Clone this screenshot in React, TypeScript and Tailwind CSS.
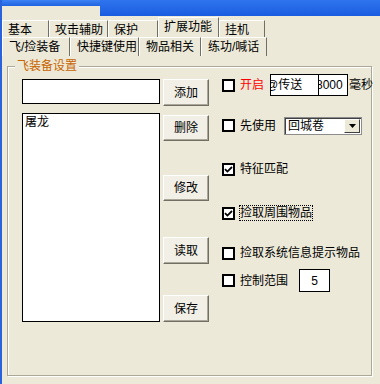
import React from 'react';

const FONT = "font-['Liberation_Sans','Noto_Sans_CJK_SC',sans-serif]";

interface TabProps {
  label: string;
  width: string;
  selected?: boolean;
}

const OuterTab: React.FC<TabProps> = ({ label, width, selected }) => (
  <div
    className={`${width} ${selected ? 'h-[20px] pt-[2px]' : 'mt-[3px] h-[17px] pt-[2px]'} pl-[5px] border-l border-t border-white border-r border-r-[#716f64] text-[12px] leading-[14px] text-black whitespace-nowrap`}
  >
    {label}
  </div>
);

const InnerTab: React.FC<TabProps> = ({ label, width }) => (
  <div
    className={`${width} h-[19px] pt-[2px] pl-[6px] border-l border-t border-white border-r border-r-[#716f64] text-[12px] leading-[14px] text-black whitespace-nowrap`}
  >
    {label}
  </div>
);

const WinButton: React.FC<{ label: string; className?: string }> = ({ label, className = '' }) => (
  <div
    className={`w-[46px] flex items-center justify-center bg-[#f1efe6] border border-t-white border-l-white border-b-[#716f64] border-r-[#716f64] shadow-[inset_-1px_-1px_0_#aca899] text-[12px] leading-[14px] ${className}`}
  >
    {label}
  </div>
);

const CheckBox: React.FC<{ checked?: boolean }> = ({ checked }) => (
  <div className="w-[13px] h-[13px] shrink-0 border-2 border-black bg-white flex items-center justify-center">
    {checked && (
      <svg width="9" height="9" viewBox="0 0 9 9">
        <path d="M1 4.2 L3.4 6.6 L8 2" fill="none" stroke="#000" strokeWidth="1.8" />
      </svg>
    )}
  </div>
);

export default function App() {
  return (
    <div className={`w-[380px] h-[384px] flex bg-[#ece9d8] overflow-hidden whitespace-nowrap ${FONT}`}>
      {/* window edge */}
      <div className="w-[2px] h-full bg-[#2a62dc]" />

      <div className="flex-1 flex flex-col">
        {/* title bar bottom */}
        <div className="h-[17px] flex">
          <div className="w-[98px]">
            <div className="h-[6px] bg-linear-to-b from-[#3d82f4] to-[#1f62e0]" />
          </div>
          <div className="flex-1 h-[16px] bg-linear-to-b from-[#2f74ee] to-[#1a5ce0]" />
        </div>

        {/* outer tabs */}
        <div className="h-[20px] flex items-start">
          <OuterTab label="基本" width="w-[47px]" />
          <OuterTab label="攻击辅助" width="w-[59px]" />
          <OuterTab label="保护" width="w-[50px]" />
          <OuterTab label="扩展功能" width="w-[61px]" selected />
          <OuterTab label="挂机" width="w-[46px]" />
        </div>

        {/* inner tabs */}
        <div className="h-[19px] flex">
          <InnerTab label="飞/捡装备" width="w-[68px]" />
          <InnerTab label="快捷键使用" width="w-[69px]" />
          <InnerTab label="物品相关" width="w-[62px]" />
          <InnerTab label="练功/喊话" width="w-[66px]" />
        </div>

        {/* group box */}
        <div className="relative mt-[10px] ml-[5px] w-[365px] h-[310px] border border-[#aca899] shadow-[inset_1px_1px_0_#fff,1px_1px_0_#fff]">
          <div className="absolute left-[7px] top-[-8px] px-[2px] bg-[#ece9d8] text-[12px] leading-[14px] text-[#c86400]">
            飞装备设置
          </div>

          <div className="flex items-start">
            {/* left: edit + list */}
            <div className="ml-[14px] mt-[12px] flex flex-col shrink-0">
              <div className="w-[138px] h-[25px] bg-white border border-black" />
              <div className="mt-[9px] w-[138px] h-[209px] bg-white border border-black px-[2px] pt-[1px] text-[12px] leading-[14px]">
                屠龙
              </div>
            </div>

            {/* buttons */}
            <div className="ml-[3px] mt-[12px] flex flex-col shrink-0">
              <WinButton label="添加" className="h-[27px]" />
              <WinButton label="删除" className="mt-[9px] h-[26px]" />
              <WinButton label="修改" className="mt-[34px] h-[26px]" />
              <WinButton label="读取" className="mt-[36px] h-[27px]" />
              <WinButton label="保存" className="mt-[31px] h-[27px]" />
            </div>

            {/* options */}
            <div className="ml-[13px] mt-[7px] flex-1 flex flex-col text-[12px] leading-[14px]">
              <div className="h-[22px] flex items-center">
                <CheckBox />
                <span className="ml-[5px] w-[25px] shrink-0 text-[#ff0000]">开启</span>
                <div className="ml-[5px] h-[22px] flex shrink-0 bg-white border border-black">
                  <div className="w-[48px] overflow-hidden border-r border-black flex items-center">
                    <span className="-ml-[5px]">@传送</span>
                  </div>
                  <div className="w-[28px] overflow-hidden flex items-center">
                    <span className="-ml-[3px]">8000</span>
                  </div>
                </div>
                <span className="ml-[1px] shrink-0">毫秒</span>
              </div>

              <div className="mt-[20px] h-[19px] flex items-center">
                <CheckBox />
                <span className="ml-[5px] w-[37px] shrink-0">先使用</span>
                <div className="ml-[7px] w-[78px] h-[18px] shrink-0 flex items-center bg-white border border-[#8c8c8c] shadow-[inset_1px_1px_0_#404040]">
                  <span className="flex-1 pl-[3px]">回城卷</span>
                  <div className="w-[16px] h-[14px] mr-[1px] flex items-center justify-center bg-[#ece9d8] border border-t-white border-l-white border-b-[#404040] border-r-[#404040]">
                    <svg width="7" height="4" viewBox="0 0 7 4">
                      <path d="M0 0 H7 L3.5 4 Z" fill="#000" />
                    </svg>
                  </div>
                </div>
              </div>

              <div className="mt-[25px] h-[18px] flex items-center">
                <CheckBox checked />
                <span className="ml-[5px]">特征匹配</span>
              </div>

              <div className="mt-[26px] h-[18px] flex items-center">
                <CheckBox checked />
                <span className="ml-[4px] border border-dotted border-black">捡取周围物品</span>
              </div>

              <div className="mt-[22px] h-[18px] flex items-center">
                <CheckBox />
                <span className="ml-[5px]">捡取系统信息提示物品</span>
              </div>

              <div className="mt-[7px] h-[23px] flex items-center">
                <CheckBox />
                <span className="ml-[5px] w-[49px] shrink-0">控制范围</span>
                <div className="ml-[10px] w-[31px] h-[23px] shrink-0 flex items-center justify-center bg-white border border-black">
                  5
                </div>
              </div>
            </div>
          </div>
        </div>
      </div>
    </div>
  );
}
